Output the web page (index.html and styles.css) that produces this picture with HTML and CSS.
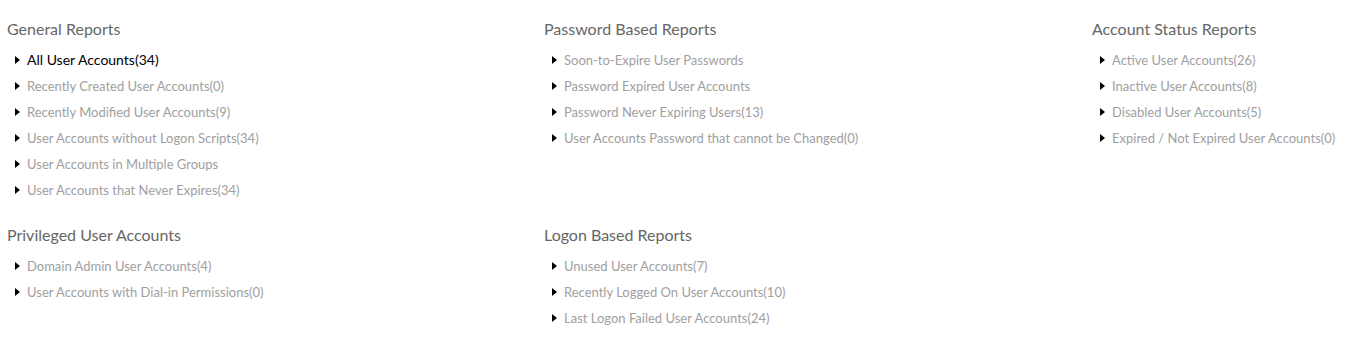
FILE: index.html
```html
<!DOCTYPE html>
<html lang="en">

<head>
    <meta charset="UTF-8">
    <meta name="viewport" content="width=device-width, initial-scale=1.0">
    <title>User Reports</title>
    <link rel="stylesheet" href="styles.css">
</head>

<body>
    <div class="reports">
        <div class="section">
            <h3>General Reports</h3>
            <ul>
                <li class="active">All User Accounts(34)</li>
                <li>Recently Created User Accounts(0)</li>
                <li>Recently Modified User Accounts(9)</li>
                <li>User Accounts without Logon Scripts(34)</li>
                <li>User Accounts in Multiple Groups</li>
                <li>User Accounts that Never Expires(34)</li>
            </ul>
        </div>

        <div class="section">
            <h3>Password Based Reports</h3>
            <ul>
                <li>Soon-to-Expire User Passwords</li>
                <li>Password Expired User Accounts</li>
                <li>Password Never Expiring Users(13)</li>
                <li>User Accounts Password that cannot be Changed(0)</li>
            </ul>
        </div>

        <div class="section">
            <h3>Account Status Reports</h3>
            <ul>
                <li>Active User Accounts(26)</li>
                <li>Inactive User Accounts(8)</li>
                <li>Disabled User Accounts(5)</li>
                <li>Expired / Not Expired User Accounts(0)</li>
            </ul>
        </div>

        <div class="section">
            <h3>Privileged User Accounts</h3>
            <ul>
                <li>Domain Admin User Accounts(4)</li>
                <li>User Accounts with Dial-in Permissions(0)</li>
            </ul>
        </div>

        <div class="section">
            <h3>Logon Based Reports</h3>
            <ul>
                <li>Unused User Accounts(7)</li>
                <li>Recently Logged On User Accounts(10)</li>
                <li>Last Logon Failed User Accounts(24)</li>
            </ul>
        </div>
    </div>
</body>

</html>
```

FILE: styles.css
```css
body {
    font-family: Lato, "Open Sans", Arial, sans-serif;
    background-color: #fff;
    margin: 0;
    padding: 19px 7px 0;
}

.reports {
    display: grid;
    grid-template-columns: 537px 548px 1fr;
    row-gap: 22px;
}

.section h3 {
    margin: 0;
    font-size: 16px;
    font-weight: normal;
    line-height: 20px;
    color: #666;
}

.section ul {
    list-style: none;
    margin: 8px 0 0;
    padding: 0 0 0 8px;
}

.section li {
    display: flex;
    align-items: center;
    gap: 7px;
    font-size: 13px;
    line-height: 26px;
    color: #a0a0a0;
    cursor: pointer;
}

.section li::before {
    content: "";
    width: 0;
    height: 0;
    border-top: 4px solid transparent;
    border-bottom: 4px solid transparent;
    border-left: 5px solid #000;
}

.section li.active {
    font-size: 14px;
    color: #000;
}
```
